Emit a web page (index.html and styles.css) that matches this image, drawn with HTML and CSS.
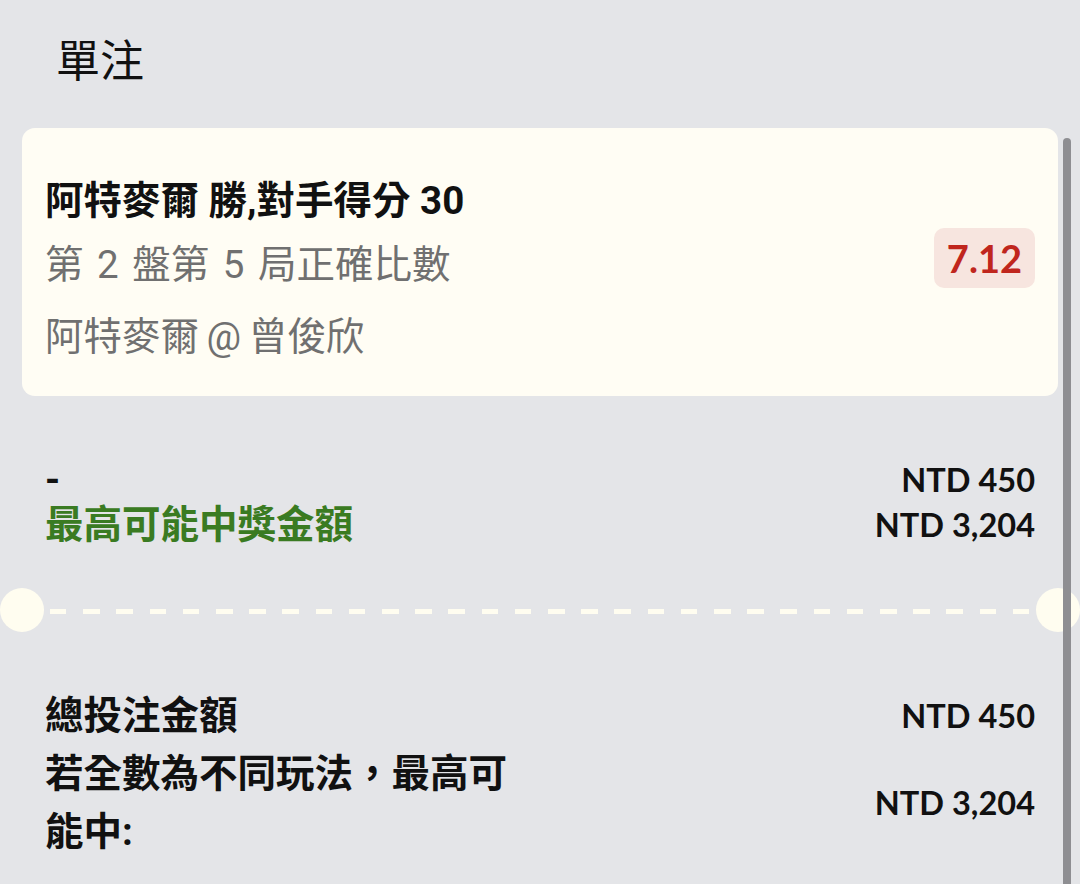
FILE: index.html
```html
<!DOCTYPE html>
<html lang="zh-Hant">
<head>
    <meta charset="UTF-8">
    <meta name="viewport" content="width=device-width, initial-scale=1.0">
    <title>單注</title>
    <link rel="stylesheet" href="styles.css">
</head>
<body>
    <div class="page">
        <h1 class="title">單注</h1>

        <div class="bet-card">
            <div class="bet-info">
                <div class="bet-name">阿特麥爾 勝,對手得分 30</div>
                <div class="bet-market">第 2 盤第 5 局正確比數</div>
                <div class="bet-event">阿特麥爾 @ 曾俊欣</div>
            </div>
            <div class="odds">7.12</div>
        </div>

        <div class="summary">
            <div class="row">
                <span class="label">-</span>
                <span class="amount">NTD 450</span>
            </div>
            <div class="row">
                <span class="label win">最高可能中獎金額</span>
                <span class="amount">NTD 3,204</span>
            </div>
        </div>

        <div class="divider">
            <span class="notch"></span>
            <span class="dashes"></span>
            <span class="notch"></span>
        </div>

        <div class="totals">
            <div class="row">
                <span class="label">總投注金額</span>
                <span class="amount">NTD 450</span>
            </div>
            <div class="row">
                <span class="label wrap">若全數為不同玩法，最高可能中:</span>
                <span class="amount">NTD 3,204</span>
            </div>
        </div>
    </div>
    <div class="scrollbar"></div>
</body>
</html>
```

FILE: styles.css
```css
body {
    margin: 0;
    background-color: #e4e5e8;
    font-family: Roboto, "Noto Sans CJK TC", sans-serif;
    color: #111;
    overflow: hidden;
}

.page {
    padding: 0 22px;
}

.title {
    margin: 0;
    padding: 30px 0 34px 34px;
    font-size: 44px;
    font-weight: 400;
    line-height: 64px;
}

.bet-card {
    display: flex;
    justify-content: space-between;
    align-items: center;
    background-color: #fffdf4;
    border-radius: 13px;
    padding: 41px 23px 27px;
}

.bet-info {
    font-size: 38.5px;
    line-height: 64px;
}

.bet-name {
    font-weight: 700;
}

.bet-market,
.bet-event {
    color: #707070;
}

.bet-market {
    word-spacing: 4px;
}

.bet-event {
    margin-top: 8px;
    word-spacing: -2px;
}

.odds {
    font-family: Lato, "Liberation Sans", sans-serif;
    font-size: 38px;
    font-weight: 700;
    color: #c0261d;
    background-color: #f7e5df;
    border-radius: 10px;
    height: 60px;
    line-height: 60px;
    padding: 0 13px;
    margin-bottom: 22px;
}

.row {
    display: flex;
    justify-content: space-between;
    align-items: center;
    padding: 0 23px;
}

.label {
    font-size: 38.5px;
    font-weight: 700;
}

.label.win {
    color: #3a7b22;
}

.label.wrap {
    max-width: 480px;
}

.amount {
    font-family: Lato, "Liberation Sans", sans-serif;
    font-size: 32.5px;
    font-weight: 700;
}

.summary {
    margin-top: 61px;
    line-height: 45px;
}

.divider {
    display: flex;
    align-items: center;
    margin: 41px -22px 0;
    height: 44px;
}

.notch {
    width: 44px;
    height: 44px;
    border-radius: 50%;
    background-color: #fffdf0;
    flex-shrink: 0;
}

.dashes {
    flex: 1;
    height: 5px;
    margin: 2px 6px 0 6px;
    background: repeating-linear-gradient(90deg, #fffdf0 0 16.5px, transparent 16.5px 33.2px);
}

.totals {
    margin-top: 55px;
    line-height: 58px;
}

/* indicador de scroll del contenedor */
.scrollbar {
    position: fixed;
    top: 138px;
    left: 1063px;
    width: 8px;
    height: 760px;
    border-radius: 4px;
    background-color: #8e8e92;
}
```
